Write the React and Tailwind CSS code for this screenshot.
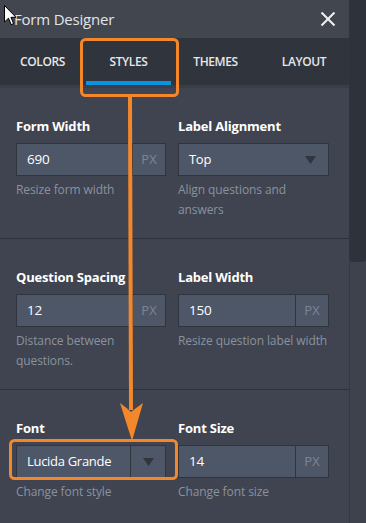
import React from "react";

// ── Form field pieces ──

function Label({ children }) {
  return (
    <div className="text-[13px] leading-[18px] font-bold text-white tracking-[-0.2px] whitespace-nowrap">
      {children}
    </div>
  );
}

function Help({ children }) {
  return (
    <div className="mt-[4px] text-[12px] leading-[20px] text-[#8b929e] tracking-[-0.1px]">{children}</div>
  );
}

function PxInput({ value }) {
  return (
    <div className="mt-[8px] flex h-[33px] border border-[#2f343d] bg-[#4e5768]">
      <div className="flex-1 flex items-center pl-[10px] text-[13.5px] text-white tracking-[-0.2px]">
        {value}
      </div>
      <div className="w-[33px] flex items-center justify-center border-l border-[#2f343d] text-[13px] text-[#7d8594]">
        PX
      </div>
    </div>
  );
}

function Caret() {
  return (
    <svg width="11" height="8" viewBox="0 0 11 8">
      <path d="M0 0H11L5.5 8Z" fill="#30353e" />
    </svg>
  );
}

function SelectBox({ value, split }) {
  return (
    <div className="mt-[8px] flex h-[33px] border border-[#2f343d] bg-[#4e5768]">
      <div className="flex-1 flex items-center pl-[10px] text-[13px] text-white tracking-[-0.3px]">
        {value}
      </div>
      <div
        className={`w-[35px] flex items-center justify-center ${split ? "border-l border-[#2f343d]" : ""}`}
      >
        <Caret />
      </div>
    </div>
  );
}

function Section({ left, right, first }) {
  return (
    <div
      className={`shrink-0 grid grid-cols-[150px_151px] gap-x-[12px] pl-[16px] pt-[29px] pb-[18px] ${
        first ? "h-[150px]" : "h-[151px] border-t border-[#2d3139]"
      }`}
    >
      <div>{left}</div>
      <div>{right}</div>
    </div>
  );
}

// ── Orange annotation drawn over the panel ──

function Annotation() {
  return (
    <svg className="absolute inset-0 pointer-events-none" width="366" height="523">
      <rect x="81.5" y="39.5" width="96" height="56" rx="4" fill="none" stroke="#f5872b" strokeWidth="3" />
      <line x1="130" y1="97" x2="131" y2="410" stroke="#f5872b" strokeWidth="4" />
      <path d="M120 403 Q127 408 131 412 Q136 408 143 403 L132 441 Z" fill="#f5872b" />
      <rect x="10.5" y="440.5" width="166" height="38" rx="4" fill="none" stroke="#f5872b" strokeWidth="3" />
    </svg>
  );
}

function Cursor() {
  return (
    <svg className="absolute left-[4px] top-[5px]" width="13" height="21" viewBox="0 0 13 21">
      <path
        d="M0.5 0.5V17L4.5 13.2L7.2 19.6L9.6 18.6L6.9 12.3H12Z"
        fill="#ffffff"
        stroke="#000000"
        strokeWidth="1"
        strokeLinejoin="round"
      />
    </svg>
  );
}

const TABS = [
  { label: "COLORS", w: "w-[85px]" },
  { label: "STYLES", w: "w-[87px]", active: true },
  { label: "THEMES", w: "w-[87px]" },
  { label: "LAYOUT", w: "w-[90px]" },
];

export default function App() {
  return (
    <div
      className="relative w-[366px] h-[523px] overflow-hidden flex bg-[#3f4450]"
      style={{ fontFamily: '"Open Sans", "Noto Sans", sans-serif' }}
    >
      <div className="w-[349px] flex flex-col">
        {/* Header */}
        <div className="shrink-0 h-[38px] flex items-center justify-between bg-[#41464f] pl-[14px] pr-[13px]">
          <span className="text-[15px] text-[#e2e4e7] tracking-[-0.2px]">Form Designer</span>
          <svg width="16" height="16" viewBox="0 0 16 16">
            <path d="M1.5 1.5L14.5 14.5M14.5 1.5L1.5 14.5" stroke="#f2f2f2" strokeWidth="2" />
          </svg>
        </div>

        {/* Tabs */}
        <div className="shrink-0 h-[50px] flex bg-[#30343c] border-b-[3px] border-[#393e47]">
          {TABS.map((t) => (
            <div key={t.label} className={`${t.w} relative flex items-center justify-center`}>
              <span className="text-[12px] font-semibold text-[#e6e7e9] tracking-[-0.4px]">{t.label}</span>
              {t.active && (
                <div className="absolute left-[1px] right-[1px] bottom-[0px] h-[4px] bg-[#0a93e2]" />
              )}
            </div>
          ))}
        </div>

        {/* Sections */}
        <Section
          first
          left={
            <>
              <Label>Form Width</Label>
              <PxInput value="690" />
              <Help>Resize form width</Help>
            </>
          }
          right={
            <>
              <Label>Label Alignment</Label>
              <SelectBox value="Top" />
              <Help>Align questions and answers</Help>
            </>
          }
        />
        <Section
          left={
            <>
              <Label>Question Spacing</Label>
              <PxInput value="12" />
              <Help>Distance between questions.</Help>
            </>
          }
          right={
            <>
              <Label>Label Width</Label>
              <PxInput value="150" />
              <Help>Resize question label width</Help>
            </>
          }
        />
        <Section
          left={
            <>
              <Label>Font</Label>
              <SelectBox value="Lucida Grande" split />
              <Help>Change font style</Help>
            </>
          }
          right={
            <>
              <Label>Font Size</Label>
              <PxInput value="14" />
              <Help>Change font size</Help>
            </>
          }
        />
      </div>

      {/* Scrollbar */}
      <div className="w-[17px] flex flex-col">
        <div className="h-[262px] bg-[#2e323a] rounded-b-[3px]" />
        <div className="flex-1 border-l border-[#343941] bg-[#3d424d]" />
      </div>

      <Annotation />
      <Cursor />
    </div>
  );
}
